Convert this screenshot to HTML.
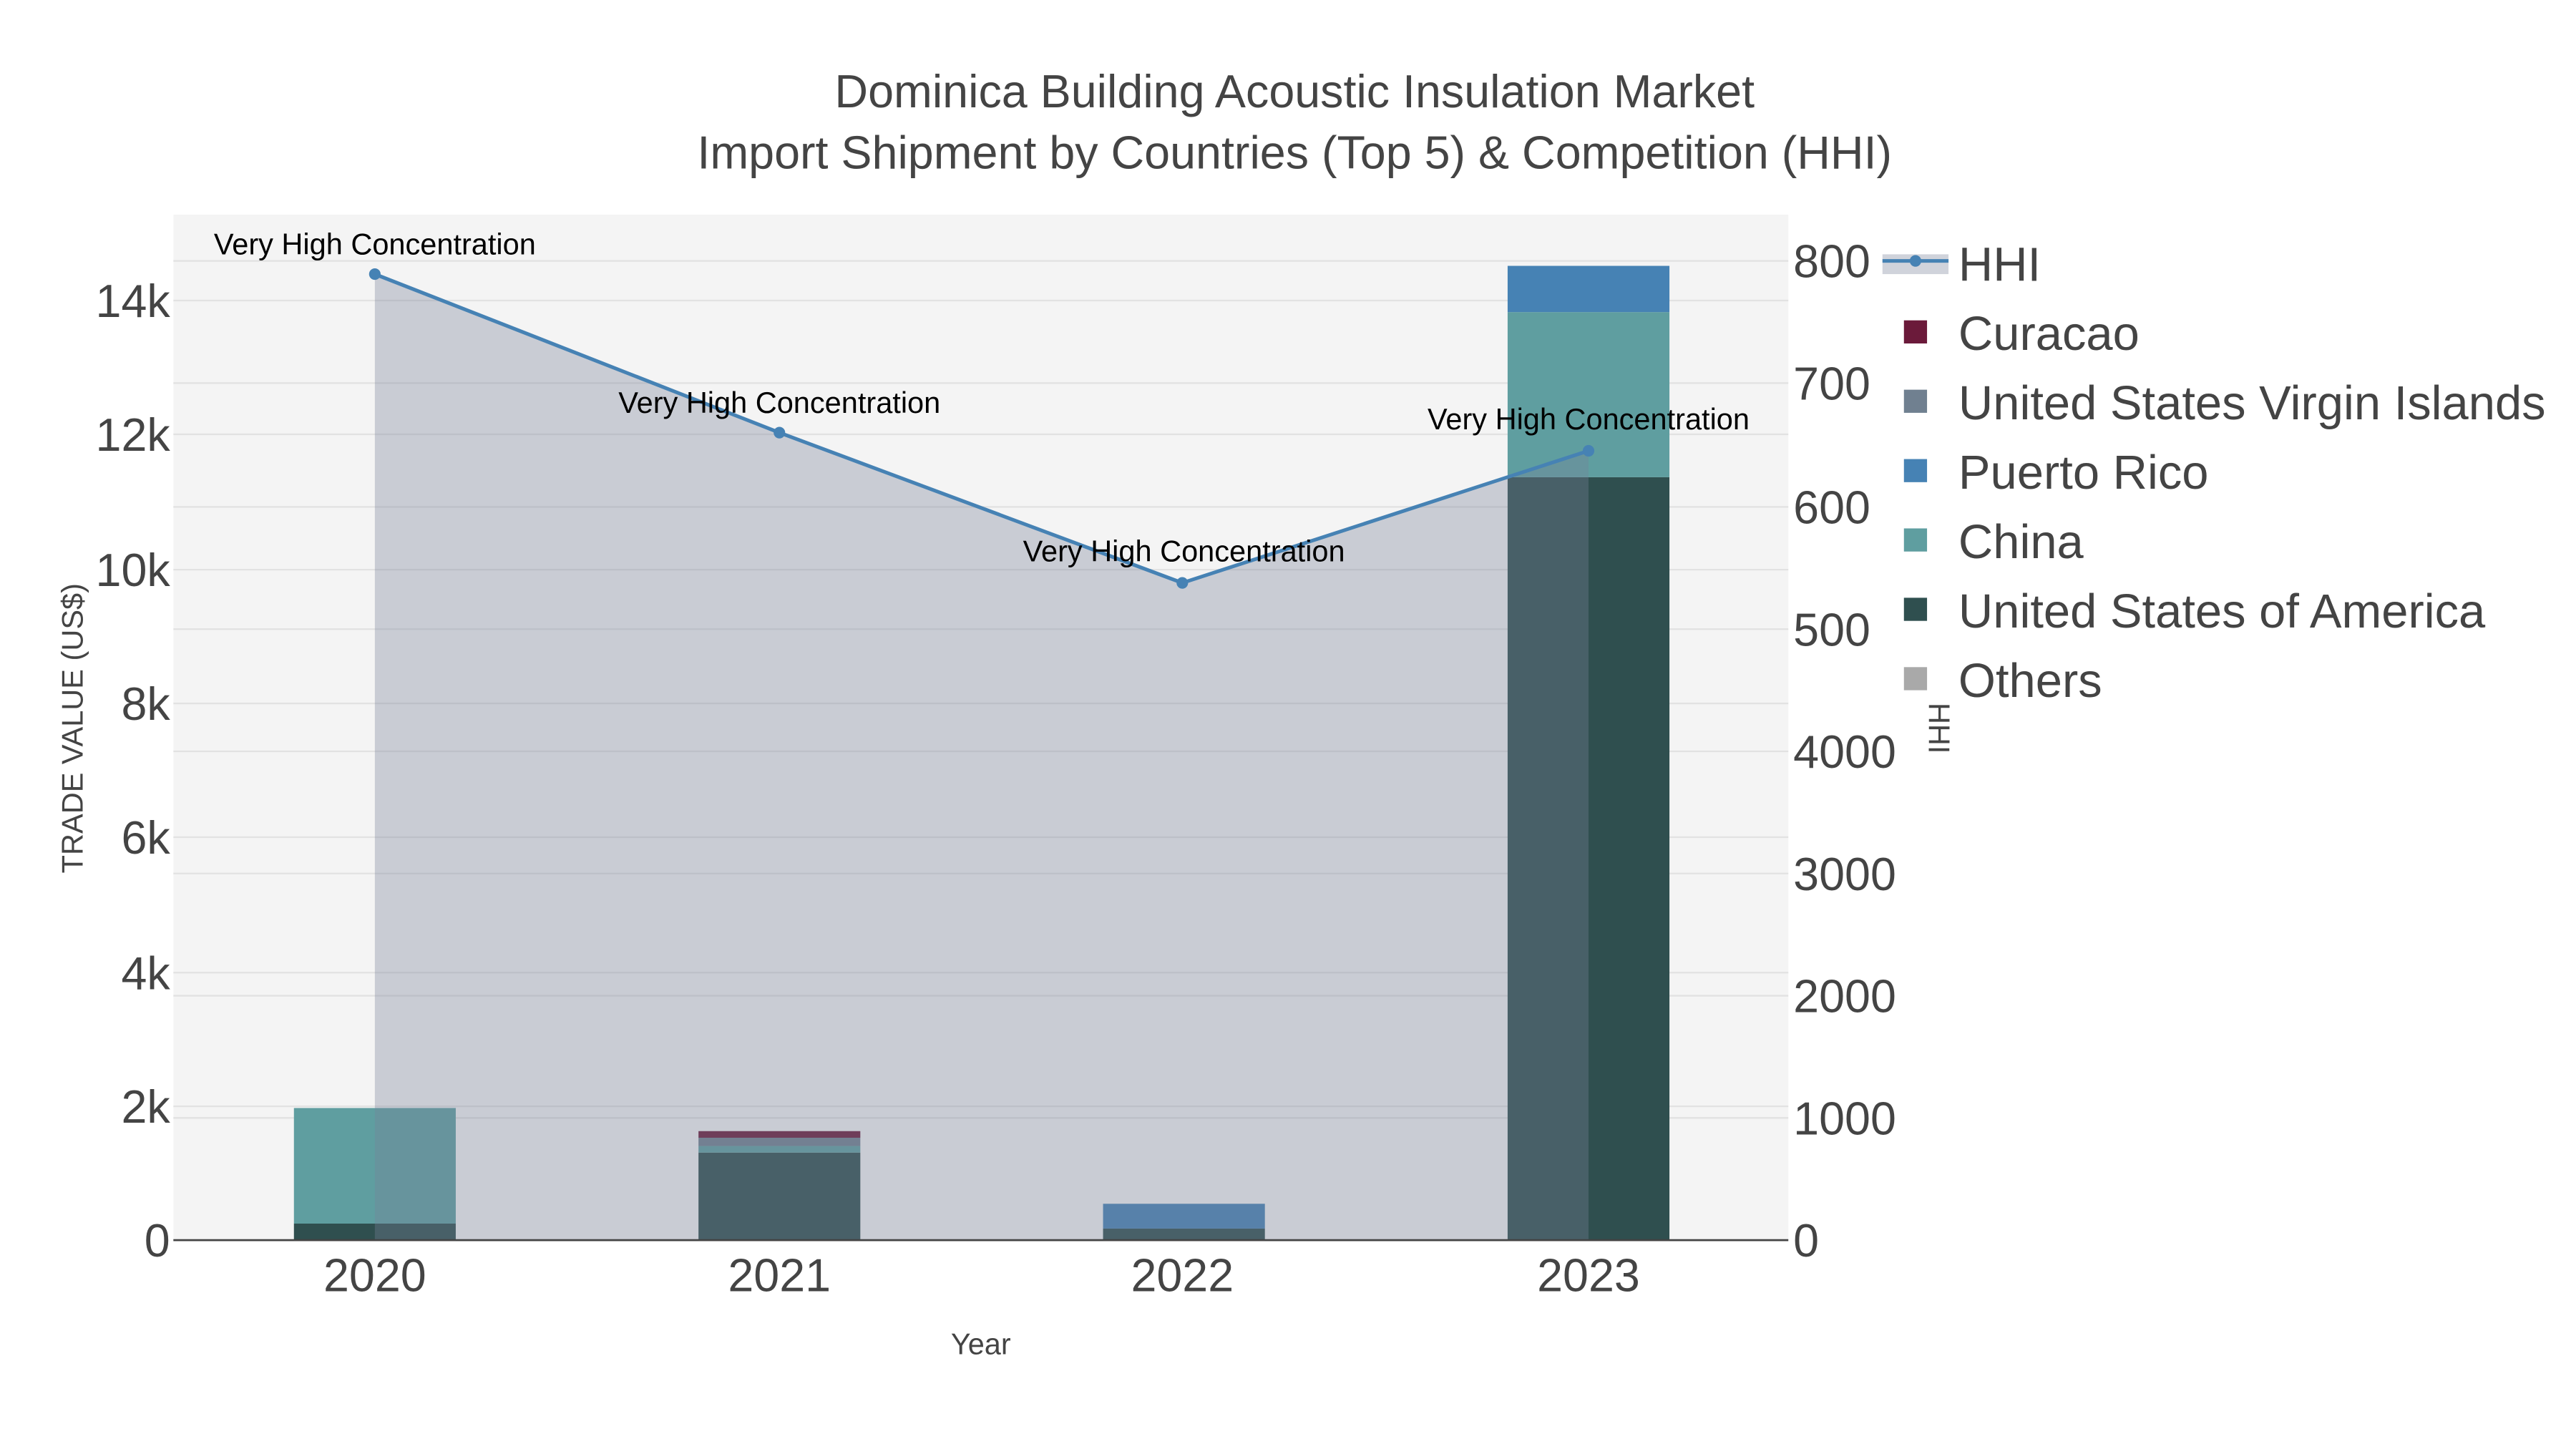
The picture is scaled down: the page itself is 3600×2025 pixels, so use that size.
<!DOCTYPE html>
<html><head><meta charset="utf-8"><style>
html,body{margin:0;padding:0;background:#fff;}
svg{display:block;font-family:"Liberation Sans",Arial,sans-serif;}
</style></head><body>
<svg width="3600" height="2025" viewBox="0 0 1560 877.5" xmlns="http://www.w3.org/2000/svg">
<rect width="1560" height="877.5" fill="#fff"/>
<text x="784" y="65" font-size="28" fill="#444" text-anchor="middle">Dominica Building Acoustic Insulation Market</text>
<text x="784" y="102" font-size="28" fill="#444" text-anchor="middle">Import Shipment by Countries (Top 5) &amp; Competition (HHI)</text>
<rect x="105" y="130" width="978" height="621" fill="#f4f4f4"/>
<g stroke="#e2e2e2" stroke-width="1">
<line x1="105" x2="1083" y1="670" y2="670"/><line x1="105" x2="1083" y1="589" y2="589"/>
<line x1="105" x2="1083" y1="507" y2="507"/><line x1="105" x2="1083" y1="426" y2="426"/>
<line x1="105" x2="1083" y1="345" y2="345"/><line x1="105" x2="1083" y1="263" y2="263"/>
<line x1="105" x2="1083" y1="182" y2="182"/>
<line x1="105" x2="1083" y1="677" y2="677"/><line x1="105" x2="1083" y1="603" y2="603"/>
<line x1="105" x2="1083" y1="529" y2="529"/><line x1="105" x2="1083" y1="455" y2="455"/>
<line x1="105" x2="1083" y1="381" y2="381"/><line x1="105" x2="1083" y1="307" y2="307"/>
<line x1="105" x2="1083" y1="232" y2="232"/><line x1="105" x2="1083" y1="158" y2="158"/>
</g>
<rect x="178" y="671" width="98" height="70" fill="#5F9EA0"/>
<rect x="178" y="741" width="98" height="10" fill="#2F4F4F"/>
<rect x="423" y="698" width="98" height="53" fill="#2F4F4F"/>
<rect x="423" y="694" width="98" height="4" fill="#5F9EA0"/>
<rect x="423" y="689" width="98" height="5" fill="#708090"/>
<rect x="423" y="685" width="98" height="4" fill="#6b1a3a"/>
<rect x="668" y="744" width="98" height="7" fill="#2F4F4F"/>
<rect x="668" y="729" width="98" height="15" fill="#4682B4"/>
<rect x="913" y="289" width="98" height="462" fill="#2F4F4F"/>
<rect x="913" y="189" width="98" height="100" fill="#5F9EA0"/>
<rect x="913" y="161" width="98" height="28" fill="#4682B4"/>
<polygon points="227,166 472,262 716,353 962,273 962,751 227,751" fill="rgba(119,130,151,0.35)"/>
<polyline points="227,166 472,262 716,353 962,273" fill="none" stroke="#4682B4" stroke-width="2.2"/>
<g fill="#4682B4"><circle cx="227" cy="166" r="3.5"/><circle cx="472" cy="262" r="3.5"/><circle cx="716" cy="353" r="3.5"/><circle cx="962" cy="273" r="3.5"/></g>
<line x1="105" x2="1083" y1="751" y2="751" stroke="#444" stroke-width="1.2"/>
<g font-size="18" fill="#000" text-anchor="middle">
<text x="227" y="154">Very High Concentration</text>
<text x="472" y="250">Very High Concentration</text>
<text x="717" y="340">Very High Concentration</text>
<text x="962" y="260">Very High Concentration</text>
</g>
<g font-size="28" fill="#444" text-anchor="end">
<text x="103" y="761">0</text><text x="103" y="680">2k</text><text x="103" y="599">4k</text>
<text x="103" y="517">6k</text><text x="103" y="436">8k</text><text x="103" y="355">10k</text>
<text x="103" y="273">12k</text><text x="103" y="192">14k</text>
</g>
<g font-size="28" fill="#444">
<text x="1086" y="761">0</text><text x="1086" y="687">1000</text><text x="1086" y="613">2000</text>
<text x="1086" y="539">3000</text><text x="1086" y="465">4000</text><text x="1086" y="391">500</text>
<text x="1086" y="317">600</text><text x="1086" y="242">700</text><text x="1086" y="168">800</text>
</g>
<g font-size="28" fill="#444" text-anchor="middle">
<text x="227" y="782">2020</text><text x="472" y="782">2021</text><text x="716" y="782">2022</text><text x="962" y="782">2023</text>
</g>
<text x="594" y="820" font-size="18" fill="#444" text-anchor="middle">Year</text>
<text transform="translate(50,441) rotate(-90)" font-size="18" fill="#444" text-anchor="middle">TRADE VALUE (US$)</text>
<text transform="translate(1168,441) rotate(90)" font-size="18" fill="#444" text-anchor="middle">HHI</text>
<rect x="1140" y="154" width="40" height="12" fill="rgba(119,130,151,0.35)"/>
<line x1="1140" x2="1180" y1="158" y2="158" stroke="#4682B4" stroke-width="2.2"/>
<circle cx="1160" cy="158" r="3.5" fill="#4682B4"/>
<rect x="1153" y="194" width="14" height="14" fill="#6b1a3a"/>
<rect x="1153" y="236" width="14" height="14" fill="#708090"/>
<rect x="1153" y="278" width="14" height="14" fill="#4682B4"/>
<rect x="1153" y="320" width="14" height="14" fill="#5F9EA0"/>
<rect x="1153" y="362" width="14" height="14" fill="#2F4F4F"/>
<rect x="1153" y="404" width="14" height="14" fill="#A9A9A9"/>
<g font-size="29" fill="#444">
<text x="1186" y="170">HHI</text><text x="1186" y="212">Curacao</text>
<text x="1186" y="254">United States Virgin Islands</text><text x="1186" y="296">Puerto Rico</text>
<text x="1186" y="338">China</text><text x="1186" y="380">United States of America</text>
<text x="1186" y="422">Others</text>
</g>
</svg>
</body></html>
